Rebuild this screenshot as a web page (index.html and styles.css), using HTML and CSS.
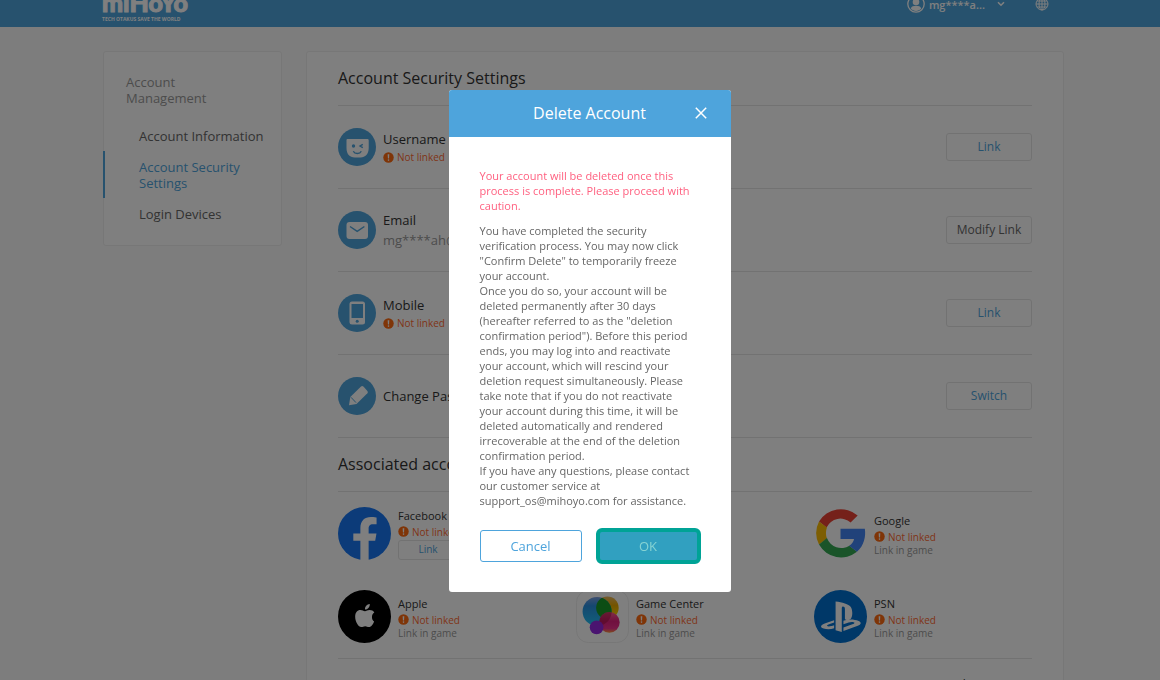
FILE: index.html
```
<!DOCTYPE html>
<html lang="en">
<head>
    <meta charset="UTF-8">
    <meta name="viewport" content="width=device-width, initial-scale=1.0">
    <title>Account Security Settings</title>
    <link rel="stylesheet" href="styles.css">
</head>
<body>
    <svg class="defs" width="0" height="0" aria-hidden="true">
        <symbol id="warn" viewBox="0 0 12 12">
            <circle cx="6" cy="6" r="5.7" fill="#ff6a10"/>
            <path d="M5.1 2.4h1.8l-.3 4.6H5.4z" fill="#fff"/>
            <circle cx="6" cy="8.8" r=".9" fill="#fff"/>
        </symbol>
    </svg>

    <header class="header">
        <div class="header-inner">
            <a href="#" class="logo">
                <span class="logo-name">mıHoYo</span>
                <span class="logo-sub">TECH OTAKUS SAVE THE WORLD</span>
            </a>
            <div class="header-right">
                <a href="#" class="user">
                    <svg width="18" height="18" viewBox="0 0 18 18">
                        <circle cx="9" cy="9" r="8.2" fill="none" stroke="#fff" stroke-width="1.3"/>
                        <circle cx="9" cy="7" r="3.3" fill="#fff"/>
                        <path d="M3.8 13.4c.8-2 2.600-2.600 5.200-2.600s4.400.6 5.200 2.600C13 15 11 15.900 9 15.900s-4-.9-5.200-2.500z" fill="#fff"/>
                    </svg>
                    <span>mg****a...</span>
                    <svg class="arrow" width="8" height="6" viewBox="0 0 8 6">
                        <path d="M1 1.200l3 3 3-3" fill="none" stroke="#fff" stroke-width="1.6"/>
                    </svg>
                </a>
                <a href="#" class="lang" aria-label="Language">
                    <svg width="14" height="14" viewBox="0 0 14 14" fill="none" stroke="#fff" stroke-width="1">
                        <circle cx="7" cy="7" r="6"/>
                        <ellipse cx="7" cy="7" rx="3" ry="6"/>
                        <path d="M7 1v12M1 7h12M2 4h10M2 10h10"/>
                    </svg>
                </a>
            </div>
        </div>
    </header>

    <div class="container">
        <nav class="sidebar">
            <h3>Account Management</h3>
            <a href="#">Account Information</a>
            <a href="#" class="active">Account Security Settings</a>
            <a href="#">Login Devices</a>
        </nav>

        <main class="main">
            <h2>Account Security Settings</h2>
            <div class="row">
                <svg class="row-icon" viewBox="0 0 38 38">
                    <circle cx="19" cy="19" r="19" fill="#4ea4dc"/>
                    <path d="M9.500 11h20a1.200 1.200 0 0 1 1.200 1.200V20c0 6-3.500 9.500-8 9.500h-6c-5 0-8.200-3.500-8.200-9.500v-8A1 1 0 0 1 9.500 11z" fill="#fff"/>
                    <circle cx="15.500" cy="18" r="1.700" fill="#4ea4dc"/>
                    <path d="M24.800 16.300L22 18l2.800 1.700M15.300 23.300c1.500 3 6.500 3 8 0" fill="none" stroke="#4ea4dc" stroke-width="1.400"/>
                </svg>
                <div class="row-text">
                    <p>Username</p>
                    <p class="not-linked"><svg><use href="#warn"/></svg>Not linked</p>
                </div>
                <button class="btn">Link</button>
            </div>
            <div class="row">
                <svg class="row-icon" viewBox="0 0 38 38">
                    <circle cx="19" cy="19" r="19" fill="#4ea4dc"/>
                    <rect x="8.500" y="11" width="21.500" height="17" rx="3" fill="#fff"/>
                    <path d="M12 15.500l7.200 4.800 7.200-4.800" fill="none" stroke="#4ea4dc" stroke-width="1.500"/>
                </svg>
                <div class="row-text">
                    <p>Email</p>
                    <p class="value">mg****ah@****</p>
                </div>
                <button class="btn gray">Modify Link</button>
            </div>
            <div class="row">
                <svg class="row-icon" viewBox="0 0 38 38">
                    <circle cx="19" cy="19" r="19" fill="#4ea4dc"/>
                    <rect x="11.500" y="7.500" width="15.500" height="23" rx="2.500" fill="#fff"/>
                    <path d="M13.500 10h11.500v14H13.500z" fill="#4ea4dc"/>
                    <circle cx="19.200" cy="27.300" r="1.500" fill="#4ea4dc"/>
                </svg>
                <div class="row-text">
                    <p>Mobile</p>
                    <p class="not-linked"><svg><use href="#warn"/></svg>Not linked</p>
                </div>
                <button class="btn">Link</button>
            </div>
            <div class="row">
                <svg class="row-icon" viewBox="0 0 38 38">
                    <circle cx="19" cy="19" r="19" fill="#4ea4dc"/>
                    <path d="M23 9.600q1.200-1 2.400 0l4 4.300q1 1.200 0 2.400L18.500 27l-7.500 1.200L12.300 20z" fill="#fff"/>
                    <path d="M13 20.300l5 5.300" stroke="#4ea4dc" stroke-width="1"/>
                </svg>
                <div class="row-text">
                    <p>Change Password</p>
                </div>
                <button class="btn">Switch</button>
            </div>

            <h2>Associated accounts</h2>
            <div class="accounts">
                <div class="account">
                    <svg class="account-icon" viewBox="0 0 54 54">
                        <circle cx="27" cy="27" r="27" fill="#1877f2"/>
                        <path d="M22.800 54V34.500h-7.200V27h7.200v-5.500c0-7.300 4.200-11.300 10.800-11.300 3.100 0 5.700.5 5.700.5v6.800h-3.600c-3.500 0-4.500 2.200-4.500 4.500v5h8l-1.300 7.500h-6.700V54z" fill="#fff"/>
                    </svg>
                    <div class="account-text">
                        <p>Facebook</p>
                        <p class="not-linked"><svg><use href="#warn"/></svg>Not linked</p>
                        <button class="btn mini">Link</button>
                    </div>
                </div>
                <div class="account last">
                    <svg class="account-icon" viewBox="0 0 54 54">
                        <path d="M5.100 14.900A26 26 0 0 1 44.500 8.600l-7.200 7.200A15.600 15.600 0 0 0 12.800 20.800z" fill="#ea4335"/>
                        <path d="M5.100 14.900a26 26 0 0 0 0 23.400l8.100-6.200a15.600 15.600 0 0 1 0-11.100z" fill="#fbbc05"/>
                        <path d="M5.100 38.300A26 26 0 0 0 43.800 45.700l-7.700-6.200A15.600 15.600 0 0 1 13.200 31.700z" fill="#34a853"/>
                        <path d="M27 22.200h24.800c1.200 8-.8 17-8 23.500l-8-6.200c2.800-1.700 4.500-4.200 5-7H27z" fill="#4285f4"/>
                    </svg>
                    <div class="account-text">
                        <p>Google</p>
                        <p class="not-linked"><svg><use href="#warn"/></svg>Not linked</p>
                        <p class="hint">Link in game</p>
                    </div>
                </div>
                <div class="account">
                    <svg class="account-icon" viewBox="0 0 54 54">
                        <circle cx="27" cy="27" r="27" fill="#000"/>
                        <path d="M34.600 27.600c0-2.300 1-3.700 2.400-4.700-1.100-1.600-2.800-2.400-4.800-2.400-2.200 0-3.300 1.100-4.700 1.100-1.500 0-2.800-1.100-4.700-1.100-3 0-5.300 2.500-5.300 6.800 0 5.200 3.400 10.500 6.300 10.500 1.500 0 2.200-.9 3.900-.9 1.700 0 2.200.9 3.800.9 2.500 0 4.600-3.700 5.300-5.800-1.400-.7-2.200-2.200-2.200-4.400z" fill="#fff"/>
                        <path d="M32.400 14.200c-3 .3-5.200 2.800-4.800 5.600 2.800.1 5-2.700 4.800-5.600z" fill="#fff"/>
                    </svg>
                    <div class="account-text">
                        <p>Apple</p>
                        <p class="not-linked"><svg><use href="#warn"/></svg>Not linked</p>
                        <p class="hint">Link in game</p>
                    </div>
                </div>
                <div class="account">
                    <svg class="account-icon" viewBox="0 0 54 54">
                        <defs>
                            <linearGradient id="gc-blue" x1="0" y1="0" x2="0" y2="1">
                                <stop offset="0" stop-color="#7b9fe0"/>
                                <stop offset=".3" stop-color="#2a8fe0"/>
                                <stop offset="1" stop-color="#22c4f5"/>
                            </linearGradient>
                            <linearGradient id="gc-pink" x1="0" y1="0" x2="0" y2="1">
                                <stop offset="0" stop-color="#ff5d8e"/>
                                <stop offset=".45" stop-color="#e0207e"/>
                                <stop offset=".8" stop-color="#f0308c"/>
                                <stop offset="1" stop-color="#ff9a3c"/>
                            </linearGradient>
                            <linearGradient id="gc-yellow" x1="0" y1="0" x2="0" y2="1">
                                <stop offset="0" stop-color="#e8b860"/>
                                <stop offset=".4" stop-color="#e8a800"/>
                                <stop offset="1" stop-color="#ffe000"/>
                            </linearGradient>
                            <clipPath id="gc-clip"><circle cx="21.500" cy="22" r="14.800"/></clipPath>
                        </defs>
                        <rect x=".5" y=".5" width="53" height="53" rx="12" fill="#fff" stroke="#eee"/>
                        <circle cx="32" cy="18" r="11.500" fill="url(#gc-yellow)"/>
                        <circle cx="21.500" cy="22" r="14.800" fill="url(#gc-blue)"/>
                        <circle cx="32" cy="18" r="11.500" fill="#189a28" clip-path="url(#gc-clip)"/>
                        <circle cx="34" cy="33" r="10.500" fill="url(#gc-pink)"/>
                        <circle cx="34" cy="33" r="10.500" fill="#a01040" opacity=".5" clip-path="url(#gc-clip)"/>
                        <circle cx="21" cy="38" r="7" fill="#9428e0"/>
                    </svg>
                    <div class="account-text">
                        <p>Game Center</p>
                        <p class="not-linked"><svg><use href="#warn"/></svg>Not linked</p>
                        <p class="hint">Link in game</p>
                    </div>
                </div>
                <div class="account">
                    <svg class="account-icon" viewBox="0 0 54 54">
                        <circle cx="27" cy="27" r="27" fill="#0070d1"/>
                        <path d="M22 11.700v29.200l6.300 2V18.600c0-2.600 3.200-2 3.200.7v10.500c5 2.400 7.500-.5 7.500-6.300 0-5.500-2-8.200-7.500-9.800-3-1-6-1.700-9.500-2z" fill="#fff"/>
                        <path d="M20.500 30.700l-8.200 2.900c-6 2-6.500 4.500-2.500 5.700 3.300 1 7.300.9 10.700-.3v-3c-2.600 1-6 1.500-7 .8-.9-.8.800-1.500 2.500-2.200l4.500-1.600zM30 31.300c5-1.800 11-1.600 15.500.3 3.200 1.500 2.600 3.600-.9 4.900L30 41.800v-3.600l9.800-3.500c1.500-.6 2-1.500.5-1.900-1.700-.5-3.500-.2-5 .3L30 34.800z" fill="#fff"/>
                    </svg>
                    <div class="account-text">
                        <p>PSN</p>
                        <p class="not-linked"><svg><use href="#warn"/></svg>Not linked</p>
                        <p class="hint">Link in game</p>
                    </div>
                </div>
            </div>
            <div class="delete-row">
                <a href="#">Delete Account</a>
            </div>
        </main>
    </div>

    <div class="mask">
        <div class="modal" role="dialog" aria-labelledby="modal-title">
            <div class="modal-header">
                <h1 id="modal-title">Delete Account</h1>
                <button class="close" aria-label="Close">
                    <svg width="12" height="12" viewBox="0 0 12 12">
                        <path d="M.8.8l10.400 10.400M11.200.8L.8 11.200" stroke="#fff" stroke-width="1.500"/>
                    </svg>
                </button>
            </div>
            <div class="modal-body">
                <div class="modal-text">
                    <p class="alert">Your account will be deleted once this process is complete. Please proceed with caution.</p>
                    <p>You have completed the security verification process. You may now click "Confirm Delete" to temporarily freeze your account.</p>
                    <p>Once you do so, your account will be deleted permanently after 30 days (hereafter referred to as the "deletion confirmation period"). Before this period ends, you may log into and reactivate your account, which will rescind your deletion request simultaneously. Please take note that if you do not reactivate your account during this time, it will be deleted automatically and rendered irrecoverable at the end of the deletion confirmation period.</p>
                    <p>If you have any questions, please contact our customer service at support_os@mihoyo.com for assistance.</p>
                </div>
                <div class="modal-buttons">
                    <button class="cancel">Cancel</button>
                    <button class="ok">OK</button>
                </div>
            </div>
        </div>
    </div>
</body>
</html>
```
FILE: styles.css
```
* {
    box-sizing: border-box;
}
body {
    margin: 0;
    height: 100vh;
    overflow: hidden;
    background: #fafafa;
    color: #333;
    font-family: "Open Sans", "Noto Sans", sans-serif;
    font-size: 13px;
}
h1, h2, h3, p {
    margin: 0;
    font-weight: normal;
}
a {
    color: inherit;
    text-decoration: none;
}
button {
    font-family: inherit;
    cursor: pointer;
}
.defs {
    position: absolute;
}

/* header */
.header {
    display: flex;
    align-items: flex-end;
    height: 27px;
    overflow: hidden;
    background: #4ea4dc;
    color: #fff;
}
.header-inner {
    display: flex;
    flex: 1;
    justify-content: space-between;
    align-items: center;
    height: 46px;
    padding: 0 111px 0 102px;
}
.logo {
    display: flex;
    flex-direction: column;
    margin-top: 4px;
    font-weight: 700;
}
.logo-name {
    font-family: Lato, sans-serif;
    font-size: 25px;
    font-weight: 900;
    line-height: 25px;
    -webkit-text-stroke: 1px #fff;
}
.logo-sub {
    font-size: 5px;
    line-height: 8px;
}
.header-right, .user {
    display: flex;
    align-items: center;
}
.header-right {
    gap: 30px;
    font-size: 11px;
    font-weight: 600;
}
.user {
    gap: 4px;
}
.arrow {
    margin-left: 8px;
}
.lang {
    display: flex;
}

/* page */
.container {
    display: flex;
    align-items: flex-start;
    gap: 24px;
    padding: 24px 96px 0 103px;
}
.sidebar {
    display: flex;
    flex-direction: column;
    width: 179px;
    padding: 22px 0 16px;
    background: #fff;
    border: 1px solid #eee;
    border-radius: 3px;
    line-height: 16px;
    color: #666;
}
.sidebar h3 {
    margin-bottom: 14px;
    padding: 0 40px 0 22px;
    font-size: 13px;
    color: #999;
}
.sidebar a {
    padding: 8px 12px 7px 35px;
}
.sidebar .active {
    margin-left: -1px;
    padding-left: 34px;
    border-left: 2px solid #4ea4dc;
    color: #4ea4dc;
}
.main {
    flex: 1;
    padding: 0 31px;
    background: #fff;
    border: 1px solid #eee;
    border-radius: 3px;
}
.main h2 {
    height: 54px;
    border-bottom: 1px solid #e5e5e5;
    font-size: 16px;
    line-height: 53px;
}
.row {
    display: flex;
    align-items: center;
    gap: 7px;
    height: 83px;
    border-bottom: 1px solid #e5e5e5;
}
.row-icon {
    width: 38px;
    height: 38px;
}
.row-text {
    flex: 1;
    line-height: 20px;
}
.value {
    color: #999;
}
.not-linked {
    display: flex;
    align-items: center;
    gap: 3px;
    height: 16px;
    font-size: 10px;
    color: #ff6a30;
}
.not-linked svg {
    width: 11px;
    height: 11px;
}
.btn {
    width: 86px;
    height: 28px;
    padding: 0 0 2px;
    background: #fff;
    border: 1px solid #e5e5e5;
    border-radius: 3px;
    color: #4ea4dc;
    font-size: 12px;
}
.btn.gray {
    color: #666;
}
.accounts {
    display: grid;
    grid-template-columns: 238px 238px 1fr;
    grid-auto-rows: 83px;
    border-bottom: 1px solid #e5e5e5;
}
.account {
    display: flex;
    align-items: center;
    gap: 7px;
}
.account.last {
    grid-column: 3;
}
.account-icon {
    width: 53px;
    height: 53px;
}
.account-text {
    font-size: 11px;
    line-height: 16px;
}
.hint {
    font-size: 10px;
    line-height: 10px;
    color: #999;
}
.btn.mini {
    display: block;
    width: 60px;
    height: 20px;
    font-size: 10px;
}
.delete-row {
    display: flex;
    justify-content: flex-end;
    padding: 17px 0;
    font-size: 12px;
}

/* dialog */
.mask {
    position: fixed;
    inset: 0;
    display: flex;
    justify-content: center;
    align-items: center;
    padding: 2px 0 0 19px;
    background: rgba(0, 0, 0, 0.5);
}
.modal {
    width: 282px;
    background: #fff;
    border-radius: 3px;
    overflow: hidden;
}
.modal-header {
    position: relative;
    height: 47px;
    background: #4ea4dc;
    color: #fff;
    text-align: center;
}
.modal-header h1 {
    font-size: 16px;
    line-height: 47px;
}
.close {
    position: absolute;
    top: 17px;
    right: 24px;
    display: flex;
    padding: 0;
    background: none;
    border: none;
}
.modal-body {
    padding: 31px 30px 28px 31px;
    color: #666;
    font-size: 11px;
    line-height: 15px;
}
.modal-text {
    padding-right: 4px;
}
.alert {
    margin-bottom: 10px;
    color: #ff5f7f;
}
.modal-buttons {
    display: flex;
    justify-content: space-between;
    align-items: center;
    margin-top: 20px;
}
.modal-buttons button {
    border-radius: 3px;
    font-size: 13px;
}
.cancel {
    width: 102px;
    height: 32px;
    background: #fff;
    border: 1px solid #4ea4dc;
    color: #4ea4dc;
}
.modal-buttons .ok {
    width: 105px;
    height: 36px;
    background: #31a0c0;
    border: 4px solid #00a396;
    border-radius: 6px;
    color: #86d3d3;
}
```
